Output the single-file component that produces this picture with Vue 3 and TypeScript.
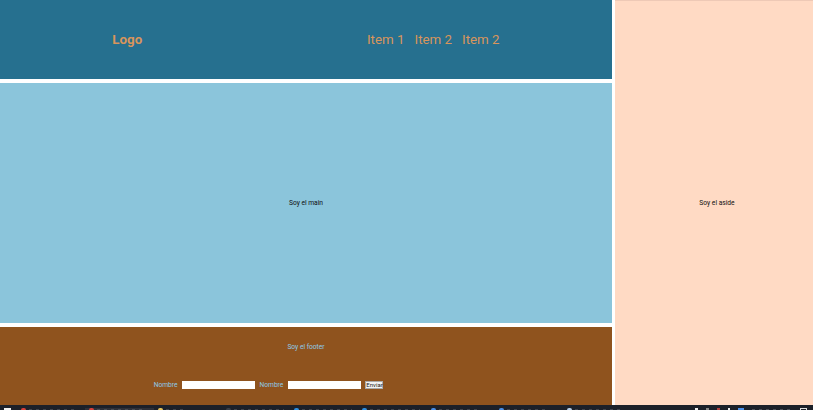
<template>
  <div class="page">
    <div class="layout">
      <div class="left">
        <header class="header">
          <span class="logo">Logo</span>
          <nav class="nav">
            <a v-for="(item, i) in items" :key="i">{{ item }}</a>
          </nav>
        </header>
        <main class="main">Soy el main</main>
        <footer class="footer">
          <p class="footer-text">Soy el footer</p>
          <form class="form" @submit.prevent>
            <label>Nombre</label>
            <input type="text" />
            <label>Nombre</label>
            <input type="text" />
            <button type="submit">Enviar</button>
          </form>
        </footer>
      </div>
      <aside class="aside">Soy el aside</aside>
    </div>
    <div class="taskbar">
      <span class="start"></span>
      <div
        v-for="task in tasks"
        :key="task.id"
        class="task"
        :class="{ active: task.active }"
      >
        <span class="task-icon" :style="{ background: task.color }"></span>
        <span class="task-label" :style="{ width: task.label + 'px' }"></span>
      </div>
      <div class="tray">
        <span class="tray-icon white"></span>
        <span class="tray-icon gray"></span>
        <span class="tray-icon red"></span>
        <span class="tray-icon white small"></span>
        <span class="tray-icon blue"></span>
        <span class="tray-clock"></span>
        <span class="tray-box"></span>
      </div>
    </div>
  </div>
</template>

<script setup lang="ts">
const items = ['Item 1', 'Item 2', 'Item 2']

const tasks = [
  { id: 1, label: 46, color: '#d9403a', active: false },
  { id: 2, label: 46, color: '#d9403a', active: true },
  { id: 3, label: 20, color: '#e8c35a', active: false },
  { id: 4, label: 50, color: '#3a3f48', active: false },
  { id: 5, label: 50, color: '#2f8fe0', active: false },
  { id: 6, label: 50, color: '#2f8fe0', active: false },
  { id: 7, label: 40, color: '#4a8ee8', active: false },
  { id: 8, label: 40, color: '#4a8ee8', active: false },
  { id: 9, label: 46, color: '#b8cfe8', active: false }
]
</script>

<style>
html,
body {
  margin: 0;
  background: #fff;
  overflow: hidden;
}
</style>

<style scoped>
.page {
  width: 813px;
  height: 410px;
  display: flex;
  flex-direction: column;
  font-family: Roboto, "Liberation Sans", sans-serif;
  color: #111;
}

.layout {
  height: 405px;
  display: flex;
  gap: 3px;
}

.left {
  width: 612px;
  display: flex;
  flex-direction: column;
  gap: 4px;
}

.header {
  height: 78.5px;
  flex: none;
  background: #26708f;
  color: #d8955c;
  display: flex;
  justify-content: space-around;
  padding-top: 31px;
  box-sizing: border-box;
  line-height: 17px;
}

.logo {
  font-size: 13.33px;
  font-weight: 700;
}

.nav {
  display: flex;
  gap: 10px;
  font-size: 13.33px;
}

.main {
  flex: 1;
  background: #8bc5db;
  font-size: 6.67px;
  display: flex;
  align-items: center;
  justify-content: center;
}

.footer {
  height: 78.5px;
  flex: none;
  background: #8f531e;
  color: #8ecae6;
  font-size: 6.67px;
  text-align: center;
}

.footer-text {
  margin: 0;
  padding-top: 16.5px;
  line-height: 8px;
}

.form {
  display: flex;
  align-items: center;
  justify-content: center;
  gap: 4.5px;
  margin-top: 30px;
  padding-right: 75px;
}

.form input {
  width: 73px;
  height: 8px;
  box-sizing: border-box;
  border: 0;
  padding: 0;
  margin: 0;
  background: #fff;
}

.form button {
  height: 8px;
  width: 18px;
  box-sizing: border-box;
  padding: 0;
  border: 1px solid #aaa;
  background: #f2f2f2;
  color: #222;
  font: 6px/6px Roboto, sans-serif;
}

.aside {
  flex: 1;
  background: #ffdac4;
  border-top: 1px solid #eec9b6;
  font-size: 6.67px;
  display: flex;
  align-items: center;
  justify-content: center;
  padding-left: 6px;
}

.taskbar {
  height: 5px;
  background: #1c2029;
  display: flex;
  overflow: hidden;
  padding-top: 3px;
  box-sizing: border-box;
}

.start {
  width: 7px;
  height: 6px;
  margin: 0 6px 0 4px;
  flex: none;
  background: #f2f2f2;
}

.task {
  flex: none;
  width: 68.25px;
  box-sizing: border-box;
  display: flex;
  gap: 3px;
  height: 6px;
  padding-left: 4px;
}

.task.active {
  background: #2e3038;
}

.task-icon {
  width: 5px;
  height: 6px;
  border-radius: 2px;
  flex: none;
}

.task-label {
  height: 1px;
  margin-top: 1px;
  background: repeating-linear-gradient(90deg, #6d7077 0 3px, transparent 3px 7px);
  opacity: 0.45;
}

.tray {
  margin-left: auto;
  display: flex;
  gap: 8px;
  padding-right: 6px;
}

.tray-icon {
  width: 3px;
  height: 6px;
}

.tray-icon.white { background: #eee; }
.tray-icon.gray { background: #888; }
.tray-icon.red { background: #b04040; }
.tray-icon.small { width: 2px; }
.tray-icon.blue { background: #4a8ee8; width: 6px; }

.tray-clock {
  width: 40px;
  height: 1px;
  margin-top: 1px;
  opacity: 0.6;
  background: repeating-linear-gradient(90deg, #6d7077 0 3px, transparent 3px 7px);
}

.tray-box {
  width: 7px;
  height: 6px;
  border: 1px solid #ddd;
  box-sizing: border-box;
}
</style>
